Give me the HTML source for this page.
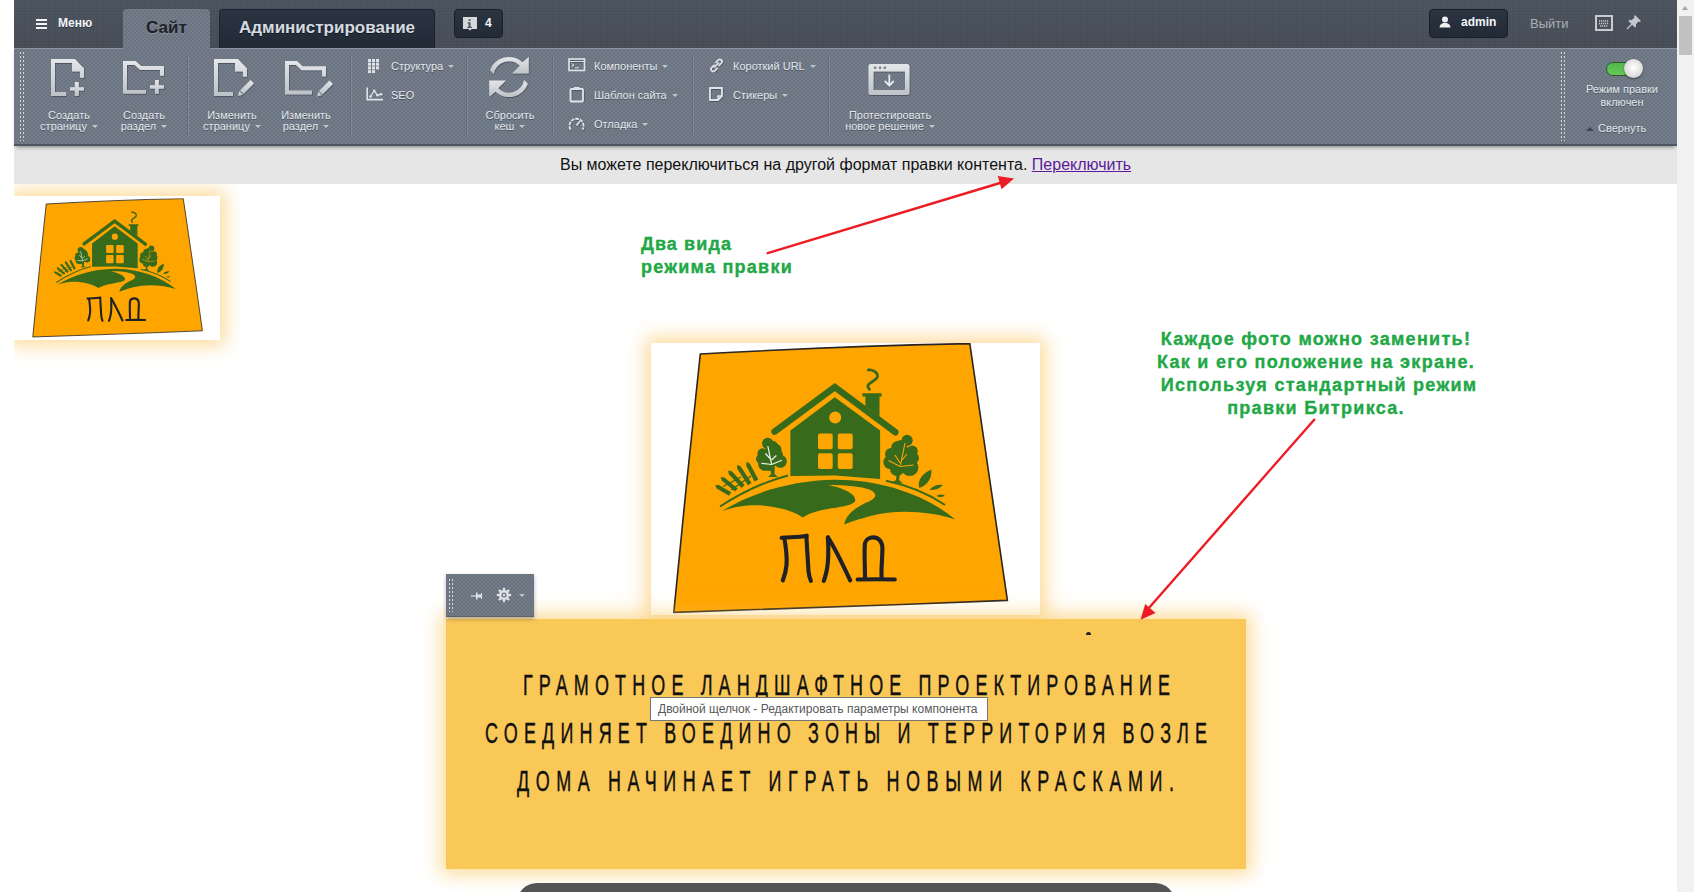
<!DOCTYPE html>
<html><head><meta charset="utf-8">
<style>
*{margin:0;padding:0;box-sizing:border-box}
html,body{width:1694px;height:892px;overflow:hidden;background:#fff;font-family:"Liberation Sans",sans-serif}
.a{position:absolute}
#hdr{left:14px;top:0;width:1663px;height:48px;background:#4b525c;
 background-image:repeating-linear-gradient(90deg,rgba(255,255,255,.025) 0 1px,transparent 1px 3px),repeating-linear-gradient(0deg,rgba(0,0,0,.04) 0 1px,transparent 1px 3px),linear-gradient(#4c545f,#464d57)}
#tb{left:14px;top:48px;width:1663px;height:98px;background-color:#747e8a;border-top:1px solid #89929d;
 background-image:radial-gradient(circle,rgba(70,76,86,.28) 0.6px,transparent 1px),radial-gradient(circle,rgba(70,76,86,.28) 0.6px,transparent 1px);background-size:4px 4px;background-position:0 0,2px 2px;
 border-bottom:2px solid #4f5762;box-shadow:0 3px 4px -2px rgba(0,0,0,.45)}
.tw{color:#e3e8ee;font-size:11px;line-height:11px;text-shadow:0 1px 0 rgba(40,45,55,.5);white-space:nowrap}
.sep{width:2px;background:linear-gradient(90deg,#646d78 0 1px,#7f8893 1px 2px)}
.arr{display:inline-block;width:0;height:0;border-left:3px solid transparent;border-right:3px solid transparent;border-top:3px solid #bfc5cc;vertical-align:middle;margin-left:5px;position:relative;top:-1px}
.dots{width:5px;background-image:linear-gradient(90deg,#d5d9de 0 1px,transparent 1px 3px,#d5d9de 3px 4px,transparent 4px);background-size:5px 100%;-webkit-mask-image:repeating-linear-gradient(#000 0 2px,transparent 2px 4px);mask-image:repeating-linear-gradient(#000 0 2px,transparent 2px 4px)}
#nb{left:14px;top:146px;width:1663px;height:38px;background:#e6e6e6;font-size:16px;color:#1a1a1a}
.grn{color:#21a845;font-weight:bold;font-size:18px;line-height:23px;white-space:nowrap;-webkit-text-stroke:0.35px #21a845}
</style></head><body>

<!-- logo symbol -->
<svg width="0" height="0" style="position:absolute"><defs>
<symbol id="logo" viewBox="0 0 389 272">
<path d="M49.3,11 C140,6 230,2 318.8,0.6 C332,90 345,175 356.4,257.4 C245,262 130,266 22.8,269.4 C31,185 40,95 49.3,11Z" fill="#ffa500" stroke="#2a2520" stroke-width="1.6" stroke-linejoin="round"/>
<g fill="#386a1b">
<!-- roof -->
<path d="M123.6,88.6L183.8,44.2L244.3,89.2" fill="none" stroke="#386a1b" stroke-width="6.6" stroke-linecap="round" stroke-linejoin="miter"/>
<path d="M211.4,50.3H230.6V53.6H228.5V73.5L214.4,63V53.6H211.4Z"/>
<path d="M217.4,27C221,26.5 227,29 226.5,33.5C226,37 219,39 217.2,42C216.5,44 217.5,45.5 218.5,46.3" fill="none" stroke="#386a1b" stroke-width="2.8" stroke-linecap="round"/>
<!-- house body -->
<path d="M139.4,87.6L183.8,54.3L229.1,87.6V136L183.8,132.5L139.4,133Z M178.2,74.5A6,6 0 1 0 190.2,74.5A6,6 0 1 0 178.2,74.5Z M169,90.6H179.7A2,2 0 0 1 181.7,92.6V104.2A2,2 0 0 1 179.7,106.2H169A2,2 0 0 1 167,104.2V92.6A2,2 0 0 1 169,90.6Z M188.8,90.6H199.7A2,2 0 0 1 201.7,92.6V104.2A2,2 0 0 1 199.7,106.2H188.8A2,2 0 0 1 186.8,104.2V92.6A2,2 0 0 1 188.8,90.6Z M169,110.2H179.7A2,2 0 0 1 181.7,112.2V124A2,2 0 0 1 179.7,126H169A2,2 0 0 1 167,124V112.2A2,2 0 0 1 169,110.2Z M188.8,110.2H199.7A2,2 0 0 1 201.7,112.2V124A2,2 0 0 1 199.7,126H188.8A2,2 0 0 1 186.8,124V112.2A2,2 0 0 1 188.8,110.2Z" fill-rule="evenodd"/>
<!-- hill -->
<path d="M71.2,167.9 C100,150 140,137.5 183.8,136.8 C230,136.5 275,152 304.2,176.4 C280,168 245,166 220.5,172.7 C208,176 199,179 193.2,181.4 C195,171 205,164 219,158 C229,153 224,147 211,144.5 C200,142.5 186,141.5 177.1,142.1 C191,145 204,150 204.3,157 C204.5,162 191,164 178,165.8 C167,167.5 158,170.5 151.9,174.4 C140,167 121,161.5 99.4,162.2 C88,163 78,165.5 71.2,167.9Z"/>
<!-- thin ground arcs -->
<path d="M69,163.5 C90,150 112,139 137,132.5" fill="none" stroke="#386a1b" stroke-width="2"/>
<path d="M235,137.8 C255,142 275,149 294,162" fill="none" stroke="#386a1b" stroke-width="2"/>
<!-- left tree -->
<circle cx="116.8" cy="100.5" r="5.8"/><circle cx="124.6" cy="106.8" r="6"/><circle cx="129.4" cy="118.4" r="6.4"/><circle cx="111.6" cy="110.5" r="5.2"/><circle cx="113.9" cy="121" r="6.8"/><circle cx="120" cy="114" r="10"/><circle cx="122" cy="103" r="5"/><circle cx="126" cy="112" r="6"/><circle cx="118" cy="122" r="6"/><circle cx="110" cy="116" r="5"/>
<path d="M119,124L123.8,124L123.5,131L127,134L117,134L120.2,131Z"/>
<path d="M116.8,103L120.7,121.5M114.4,110.5L119.5,116M125.4,112.5L120.5,117M110.5,120.4L120.7,121.5L130.9,117.2" stroke="#eef3e8" stroke-width="1.2" fill="none"/>
<!-- fence -->
<path d="M64.2,142.3L65.7,145.6L78.0,152.8L80.2,149.2L67.8,142.0ZM69.7,134.1L70.7,137.6L84.1,148.6L86.7,145.4L73.4,134.4ZM77.2,127.4L77.7,131.0L90.6,144.9L93.6,142.1L80.8,128.2ZM86.2,121.9L86.1,125.6L96.9,142.3L100.5,140.1L89.6,123.3ZM95.6,118.8L95.1,122.4L103.5,138.6L107.3,136.6L98.8,120.5Z"/><path d="M72,143.5L90,134M80,147L100,133" stroke="#386a1b" stroke-width="1.4" fill="none"/>
<!-- right tree -->
<circle cx="256.1" cy="97.4" r="5.6"/><circle cx="247" cy="105" r="7"/><circle cx="261.2" cy="108.2" r="5.6"/><circle cx="239.4" cy="119.2" r="7"/><circle cx="258.8" cy="124.5" r="8.6"/><circle cx="251.8" cy="114.5" r="11"/><circle cx="250" cy="103" r="6"/><circle cx="262" cy="115" r="6"/><circle cx="246" cy="126" r="7"/><circle cx="240" cy="111" r="6"/>
<path d="M246.5,124L250,124L248,137L252,140.5L240,140L245,137Z"/>
<path d="M254,100L249.5,122M244,112L249,120M256,111L251,117M237.5,117.5L249,123.5L262.5,122" stroke="#ffa500" stroke-width="1.1" fill="none"/>
<!-- leaves -->
<path d="M268.2,145.1C266,137 272,130 280.4,126.6C281,135 277,142 268.2,145.1Z"/>
<path d="M278.5,146.7C283,142 287,141 291.8,142C288,146 284,147.5 278.5,146.7Z"/>
<path d="M285.5,153C288,151 291,151 293.8,152.5C291,154.5 288,154.5 285.5,153Z"/>
</g>
<!-- PLD letters -->
<g fill="none" stroke="#1e2128" stroke-width="4.1" stroke-linecap="round" stroke-linejoin="round">
<path d="M130.6,194.8C140,194 148,194.5 155.8,192.7"/>
<path d="M133.5,196C135,205 136,215 135.5,222C135,228 133.5,233 131.8,237.4"/>
<path d="M155.4,193.6C156,205 157,220 157.5,228C158,233 159,236 159.9,237.8"/>
<path d="M176.9,194.4C177.5,205 177.5,218 176,226C175,231 174,235 172.7,237.8"/>
<path d="M176.9,194.4C184,205 192,222 199.2,237.4"/>
<path d="M214,234.9C214,222 213,207 214,200C215,196 219,194.4 222.3,194.4C227,194.4 231,198 231.4,204C231.5,215 230,225 230.6,234.9"/>
<path d="M206.6,236.5C220,236.2 232,236.2 243.8,236.5"/>
</g>
</symbol>
</defs></svg>

<!-- small logo -->
<div class="a" style="left:14px;top:196px;width:206px;height:144px;background:#fff;box-shadow:0 0 18px 5px rgba(250,190,75,.58)"></div>
<svg class="a" style="left:14px;top:196px" width="206" height="144" viewBox="0 0 389 272" preserveAspectRatio="none"><use href="#logo" transform="matrix(0.96,0,0,0.972,13.6,4.4)"/></svg>
<!-- big logo -->
<div class="a" style="left:651px;top:343px;width:389px;height:272px;background:#fff;box-shadow:0 0 18px 5px rgba(250,190,75,.58)"></div>
<svg class="a" style="left:651px;top:343px" width="389" height="272" viewBox="0 0 389 272"><use href="#logo"/></svg>
<!-- left white strip to clip glow -->
<div class="a" style="left:0;top:0;width:14px;height:892px;background:#fff"></div>

<!-- notification bar -->
<div id="nb" class="a"></div>
<div class="a" style="left:560px;top:156px;font-size:16px;line-height:18px;color:#111;white-space:nowrap">Вы можете переключиться на другой формат правки контента. <span style="color:#5a1a9a;text-decoration:underline">Переключить</span></div>


<!-- annotations -->
<div class="a grn" style="left:641px;top:233px;letter-spacing:1.1px">Два вида<br><span style="letter-spacing:1.25px">режима правки</span></div>
<div class="a grn" style="left:1100px;top:328px;width:432px;text-align:center;letter-spacing:1.3px">Каждое фото можно заменить!<br>Как и его положение на экране.<br>&nbsp;Используя стандартный режим<br>правки Битрикса.</div>

<!-- orange block -->
<div class="a" style="left:446px;top:619px;width:800px;height:250px;background:#fac857;box-shadow:0 0 18px 5px rgba(250,195,80,.6)"></div>
<div class="a" style="left:1086px;top:632px;width:5px;height:3px;border-radius:3px 3px 0 0;background:#222"></div>
<svg class="a" style="left:0;top:0" width="1694" height="892"><g transform="scale(0.62 1)" font-family="Liberation Sans" font-size="29" fill="#111" stroke="#111" stroke-width="0.45"><text x="843.5" y="695.4" textLength="1043.5" lengthAdjust="spacing">ГРАМОТНОЕ ЛАНДШАФТНОЕ ПРОЕКТИРОВАНИЕ</text><text x="782.3" y="742.6" textLength="1164.5" lengthAdjust="spacing">СОЕДИНЯЕТ ВОЕДИНО ЗОНЫ И ТЕРРИТОРИЯ ВОЗЛЕ</text><text x="833.9" y="791.0" textLength="1059.7" lengthAdjust="spacing">ДОМА НАЧИНАЕТ ИГРАТЬ НОВЫМИ КРАСКАМИ.</text></g></svg>
<!-- component toolbar -->
<div class="a" style="left:446px;top:574px;width:88px;height:43px;background-color:#727c88;background-image:radial-gradient(circle,rgba(70,76,86,.28) 0.6px,transparent 1px),radial-gradient(circle,rgba(70,76,86,.28) 0.6px,transparent 1px);background-size:4px 4px;background-position:0 0,2px 2px;border-bottom:1px solid #5a626d;box-shadow:0 2px 4px rgba(0,0,0,.3)"></div>
<div class="a dots" style="left:449px;top:579px;height:33px"></div>
<svg class="a" style="left:470px;top:590px" width="14" height="12" viewBox="0 0 14 12"><path d="M1,6H6" stroke="#dfe3e7" stroke-width="1.2"/><path d="M6,2.5H7.5V4.5H11V3H12V9H11V7.5H7.5V9.5H6Z" fill="#dfe3e7"/></svg>
<svg class="a" style="left:496px;top:587px" width="16" height="16" viewBox="0 0 16 16"><g fill="#dfe3e7"><circle cx="8" cy="8" r="5"/><path d="M7,0.8H9L9.3,3.5H6.7Z M7,15.2H9L9.3,12.5H6.7Z M0.8,7V9L3.5,9.3V6.7Z M15.2,7V9L12.5,9.3V6.7Z" /><path d="M7,0.8H9L9.3,3.5H6.7Z M7,15.2H9L9.3,12.5H6.7Z M0.8,7V9L3.5,9.3V6.7Z M15.2,7V9L12.5,9.3V6.7Z" transform="rotate(45 8 8)"/></g><circle cx="8" cy="8" r="2.6" fill="#727c88"/><circle cx="8" cy="8" r="1.2" fill="#dfe3e7"/></svg>
<div class="a" style="left:519px;top:594px;width:0;height:0;border-left:3px solid transparent;border-right:3px solid transparent;border-top:3px solid #bfc5cc"></div>

<!-- tooltip -->
<div class="a" style="left:650px;top:697px;width:338px;height:24px;background:#fff;border:1px solid #767676;font-size:12px;line-height:22px;color:#575757;padding-left:7px;white-space:nowrap">Двойной щелчок - Редактировать параметры компонента</div>

<!-- arrows -->
<svg class="a" style="left:0;top:0" width="1694" height="892"><g fill="#ed1c24" stroke="none">
<path d="M767.6,253.1L1000,183" stroke="#ed1c24" stroke-width="2.4" stroke-linecap="round"/>
<path d="M997.8,176.1L1014,178.5L1001.5,189.3Z"/>
<path d="M1314.2,419.7L1148,609" stroke="#ed1c24" stroke-width="2.4" stroke-linecap="round"/>
<path d="M1145.2,603.9L1155.6,613L1140.5,619.7Z"/>
</g></svg>

<!-- bottom dark bar -->
<div class="a" style="left:517px;top:883px;width:658px;height:40px;border-radius:20px;background:#545454"></div>

<!-- header -->
<div id="hdr" class="a"></div>
<div id="tb" class="a"></div>


<!-- header items -->
<div class="a" style="left:36px;top:19px;width:11px;height:2px;background:#f2f4f6;box-shadow:0 4px 0 #f2f4f6,0 8px 0 #f2f4f6"></div>
<div class="a" style="left:58px;top:16px;font-weight:bold;font-size:12px;line-height:14px;color:#f4f6f8;text-shadow:0 1px 0 rgba(0,0,0,.4)">Меню</div>
<div class="a" style="left:123px;top:9px;width:87px;height:40px;background-color:#747e8a;border-radius:4px 4px 0 0;background-image:radial-gradient(circle,rgba(70,76,86,.28) 0.6px,transparent 1px),radial-gradient(circle,rgba(70,76,86,.28) 0.6px,transparent 1px);background-size:4px 4px;background-position:0 0,2px 2px"></div>
<div class="a" style="left:146px;top:18px;font-weight:bold;font-size:17px;line-height:19px;color:#1d2128;text-shadow:0 1px 0 rgba(255,255,255,.2)">Сайт</div>
<div class="a" style="left:219px;top:9px;width:216px;height:39px;background:linear-gradient(#2b3442,#222a36);border:1px solid #1c222b;border-bottom:none;border-radius:4px 4px 0 0"></div>
<div class="a" style="left:239px;top:18px;font-weight:bold;font-size:17px;line-height:19px;color:#d6dbe0;text-shadow:0 1px 0 rgba(0,0,0,.5)">Администрирование</div>
<div class="a" style="left:454px;top:9px;width:49px;height:29px;background:linear-gradient(#2b3442,#222a36);border:1px solid #1a1f27;border-radius:4px"></div>
<svg class="a" style="left:462px;top:16px" width="16" height="16" viewBox="0 0 16 16"><path d="M1,1H15V13H9.5L8,14.8L6.5,13H1Z" fill="#d5d9dc"/><rect x="6.7" y="3.2" width="1.8" height="1.8" fill="#4a5058"/><path d="M5.5,6.2H8.5V10.8H9.8V12H5.3V10.8H6.6V7.4H5.5Z" fill="#4a5058"/></svg>
<div class="a" style="left:485px;top:16px;font-weight:bold;font-size:12px;line-height:14px;color:#f2f4f6">4</div>
<div class="a" style="left:1429px;top:9px;width:79px;height:29px;background:linear-gradient(#2b3442,#222a36);border:1px solid #1a1f27;border-radius:4px"></div>
<svg class="a" style="left:1439px;top:16px" width="12" height="12" viewBox="0 0 12 12"><circle cx="6" cy="3.6" r="3" fill="#eef0f2"/><path d="M0.5,11.5C0.8,8.3 3,7.3 4.2,7H7.8C9,7.3 11.2,8.3 11.5,11.5Z" fill="#eef0f2"/></svg>
<div class="a" style="left:1461px;top:15px;font-weight:bold;font-size:12px;line-height:15px;color:#f4f6f8">admin</div>
<div class="a" style="left:1530px;top:16px;font-size:13px;line-height:15px;color:#a9b0b8">Выйти</div>
<svg class="a" style="left:1595px;top:15px" width="18" height="16" viewBox="0 0 18 16"><rect x="1" y="1" width="16" height="14" fill="none" stroke="#c6cbd0" stroke-width="2"/><path d="M4,6H14M4,8.5H14M5,11H13" stroke="#c6cbd0" stroke-width="1.3" stroke-dasharray="1.2 .8"/></svg>
<svg class="a" style="left:1626px;top:14px" width="16" height="16" viewBox="0 0 16 16"><path d="M9,1L15,7L13.6,8L12.4,7.4L9.8,10.6L10.2,12.6L9,13.6L2.4,7L3.4,5.8L5.4,6.2L8.6,3.6L8,2.4Z" fill="#c3c8ce"/><path d="M6,10L1,15" stroke="#c3c8ce" stroke-width="1.3"/></svg>

<!-- toolbar items -->
<svg width="0" height="0" style="position:absolute"><defs>
<linearGradient id="ig" x1="0" y1="0" x2="0" y2="1"><stop offset="0" stop-color="#e4e7ea"/><stop offset="1" stop-color="#bcc2c6"/></linearGradient>
<filter id="sh" x="-20%" y="-20%" width="140%" height="140%"><feDropShadow dx="0.6" dy="0.8" stdDeviation="0.3" flood-color="#3c434d" flood-opacity="0.8"/></filter>
</defs></svg>
<div class="a dots" style="left:20px;top:52px;height:89px"></div>
<div class="a dots" style="left:1561px;top:52px;height:89px"></div>
<!-- create page -->
<svg class="a" style="left:51px;top:59px" width="36" height="40" viewBox="0 0 36 40"><g fill="url(#ig)" filter="url(#sh)"><path d="M0,0H24L33,9.4V18.7H29V12.6H21V4H4V33H15.2V37H0Z"/><path d="M19,28.3H33V31.8H19Z"/><path d="M23.8,23H27.8V37H23.8Z"/></g></svg>
<div class="a tw" style="left:30px;top:110px;width:78px;text-align:center">Создать<br>страницу<span class="arr"></span></div>
<!-- create folder -->
<svg class="a" style="left:123px;top:61px" width="44" height="36" viewBox="0 0 44 36"><g fill="url(#ig)" filter="url(#sh)"><path d="M0,0H12.6L18.2,5.1H41V14.7H37V9.1H17.2L11.6,4H4V29H23V32.8H0Z"/><path d="M27,24.3H41V27.8H27Z"/><path d="M32,19H35.8V32.8H32Z"/></g></svg>
<div class="a tw" style="left:104px;top:110px;width:80px;text-align:center">Создать<br>раздел<span class="arr"></span></div>
<div class="a sep" style="left:187px;top:56px;height:80px"></div>
<!-- edit page -->
<svg class="a" style="left:214px;top:59px" width="42" height="40" viewBox="0 0 42 40"><g fill="url(#ig)" filter="url(#sh)"><path d="M0,0H24L33,9.4V17.7H29V12.6H21V4H4V33H19V37H0Z"/><path d="M36.5,21L40,24.5L29.5,35L26,31.5Z"/><path d="M25.3,32.3L28.7,35.7L24,37Z"/></g></svg>
<div class="a tw" style="left:192px;top:110px;width:80px;text-align:center">Изменить<br>страницу<span class="arr"></span></div>
<!-- edit folder -->
<svg class="a" style="left:285px;top:61px" width="50" height="36" viewBox="0 0 50 36"><g fill="url(#ig)" filter="url(#sh)"><path d="M0,0H12L17.6,5.2H41V15.6H37V9.2H16.6L11,4H4V29.6H27V33.4H0Z"/><path d="M44.5,19.5L48,23L37.5,33.5L34,30Z"/><path d="M33.3,30.8L36.7,34.2L32.1,35.4Z"/></g></svg>
<div class="a tw" style="left:266px;top:110px;width:80px;text-align:center">Изменить<br>раздел<span class="arr"></span></div>
<div class="a sep" style="left:350px;top:56px;height:80px"></div>
<!-- structure / seo -->
<svg class="a" style="left:368px;top:59px" width="12" height="15" viewBox="0 0 12 15"><g fill="#dfe3e7"><rect x="0" y="0" width="3" height="3"/><rect x="4" y="0" width="3" height="3"/><rect x="8" y="0" width="3" height="3"/><rect x="0" y="3.7" width="3" height="3"/><rect x="4" y="3.7" width="3" height="3"/><rect x="8" y="3.7" width="3" height="3"/><rect x="0" y="7.4" width="3" height="3"/><rect x="4" y="7.4" width="3" height="3"/><rect x="8" y="7.4" width="3" height="3"/><rect x="0" y="11.1" width="3" height="3"/><rect x="4" y="11.1" width="3" height="3"/></g></svg>
<div class="a tw" style="left:391px;top:61px">Структура<span class="arr"></span></div>
<svg class="a" style="left:366px;top:87px" width="18" height="14" viewBox="0 0 18 14"><path d="M1.2,0.5V12.6H17" fill="none" stroke="#dfe3e7" stroke-width="1.6"/><path d="M4.5,9.5L8.2,3.8L11.4,8.2L15,7.2" fill="none" stroke="#dfe3e7" stroke-width="1.2"/><circle cx="4.5" cy="9.5" r="1.3" fill="#dfe3e7"/><circle cx="8.2" cy="3.8" r="1.3" fill="#dfe3e7"/><circle cx="11.4" cy="8.2" r="1.3" fill="#dfe3e7"/><circle cx="15" cy="7.2" r="1.3" fill="#dfe3e7"/></svg>
<div class="a tw" style="left:391px;top:90px">SEO</div>
<div class="a sep" style="left:466px;top:56px;height:80px"></div>
<!-- refresh -->
<svg class="a" style="left:482px;top:52px" width="54" height="50" viewBox="0 0 54 50"><g fill="url(#ig)" filter="url(#sh)"><path d="M8.1,18.2A20,20 0 0 1 40.5,10.2L46.8,5V21.6H30L37.8,13.8A15.5,15.5 0 0 0 11.8,21.9Z"/><path d="M45.9,31.8A20,20 0 0 1 13.5,39.8L7.2,45V28.4H24L16.2,36.2A15.5,15.5 0 0 0 42.2,28.1Z"/></g></svg>
<div class="a tw" style="left:470px;top:110px;width:80px;text-align:center">Сбросить<br>кеш<span class="arr"></span></div>
<div class="a sep" style="left:552px;top:56px;height:80px"></div>
<!-- components etc -->
<svg class="a" style="left:568px;top:58px" width="18" height="14" viewBox="0 0 18 14"><g filter="url(#sh)"><rect x="1" y="1" width="15.5" height="11.5" fill="none" stroke="#e0e4e8" stroke-width="1.6"/><path d="M1,3.5H16.5" stroke="#e0e4e8" stroke-width="1"/><path d="M3.6,5.5L6,7.2L3.6,8.9M7,9.8H11" fill="none" stroke="#e0e4e8" stroke-width="1"/></g></svg>
<div class="a tw" style="left:594px;top:61px">Компоненты<span class="arr"></span></div>
<svg class="a" style="left:569px;top:86px" width="17" height="17" viewBox="0 0 17 17"><g filter="url(#sh)"><rect x="1.5" y="3" width="12.5" height="12.5" rx="1" fill="none" stroke="#e0e4e8" stroke-width="1.8"/><rect x="5" y="1" width="5.5" height="3" fill="#e0e4e8"/></g></svg>
<div class="a tw" style="left:594px;top:90px">Шаблон сайта<span class="arr"></span></div>
<svg class="a" style="left:568px;top:116px" width="18" height="16" viewBox="0 0 18 16"><g filter="url(#sh)"><path d="M2.6,13.5A7,7 0 1 1 14.4,13.5" fill="none" stroke="#e0e4e8" stroke-width="1.8" stroke-dasharray="3.5 1"/><path d="M8.5,9.5L12,5" stroke="#e0e4e8" stroke-width="1.5"/></g></svg>
<div class="a tw" style="left:594px;top:119px">Отладка<span class="arr"></span></div>
<div class="a sep" style="left:692px;top:56px;height:80px"></div>
<svg class="a" style="left:708px;top:58px" width="17" height="15" viewBox="0 0 17 15"><g fill="none" stroke="#e0e4e8" stroke-width="1.7" filter="url(#sh)"><path d="M6.5,6.8L3.5,9.8A2.2,2.2 0 0 0 6.6,12.9L9.6,9.9"/><path d="M10.5,8L13.5,5A2.2,2.2 0 0 0 10.4,1.9L7.4,4.9"/><path d="M6,9.5L11,4.5"/></g></svg>
<div class="a tw" style="left:733px;top:61px">Короткий URL<span class="arr"></span></div>
<svg class="a" style="left:709px;top:87px" width="15" height="15" viewBox="0 0 15 15"><g filter="url(#sh)"><path d="M1,1H13V9L9,13H1Z" fill="none" stroke="#e0e4e8" stroke-width="1.8"/><path d="M9,13V9H13" fill="none" stroke="#e0e4e8" stroke-width="1.4"/></g></svg>
<div class="a tw" style="left:733px;top:90px">Стикеры<span class="arr"></span></div>
<div class="a sep" style="left:828px;top:56px;height:80px"></div>
<!-- test -->
<svg class="a" style="left:868px;top:63px" width="44" height="35" viewBox="0 0 44 35"><g filter="url(#sh)"><path d="M3,1H39A2.5,2.5 0 0 1 41.5,3.5V29.5A2.5,2.5 0 0 1 39,32H3A2.5,2.5 0 0 1 0.5,29.5V3.5A2.5,2.5 0 0 1 3,1ZM5.5,8.5V27H37V8.5Z" fill="url(#ig)" fill-rule="evenodd"/></g><g fill="#737c87"><circle cx="7.2" cy="4.7" r="1.3"/><circle cx="12" cy="4.7" r="1.3"/><circle cx="16.8" cy="4.7" r="1.3"/></g><path d="M21.3,11.5V22.3M16.8,18L21.3,22.5L25.8,18" fill="none" stroke="#e6e9ec" stroke-width="1.8"/></svg>
<div class="a tw" style="left:830px;top:110px;width:120px;text-align:center">Протестировать<br>новое решение<span class="arr"></span></div>
<!-- right toggle -->
<div class="a" style="left:1606px;top:62px;width:26px;height:14px;border-radius:7px;background:linear-gradient(#4fb84a,#67c95a);border:1px solid #2f5a2c"></div>
<div class="a" style="left:1624px;top:59px;width:19px;height:19px;border-radius:50%;background:radial-gradient(circle at 50% 45%,#ffffff,#e2e2e2 55%,#b9b9b9);box-shadow:0 1px 2px rgba(0,0,0,.5)"></div>
<div class="a tw" style="left:1580px;top:83px;width:84px;text-align:center;line-height:13px">Режим правки<br>включен</div>
<div class="a" style="left:1586px;top:127px;width:0;height:0;border-left:4px solid transparent;border-right:4px solid transparent;border-bottom:4px solid #3d4550"></div>
<div class="a tw" style="left:1598px;top:123px">Свернуть</div>

<!-- scrollbar -->
<div class="a" style="left:1677px;top:0;width:17px;height:892px;background:#f1f1f1"></div>
<div class="a" style="left:1682px;top:6px;width:0;height:0;border-left:3.5px solid transparent;border-right:3.5px solid transparent;border-bottom:4px solid #a3a3a3"></div>
<div class="a" style="left:1679px;top:16px;width:13px;height:39px;background:#c1c1c1"></div>

</body></html>
